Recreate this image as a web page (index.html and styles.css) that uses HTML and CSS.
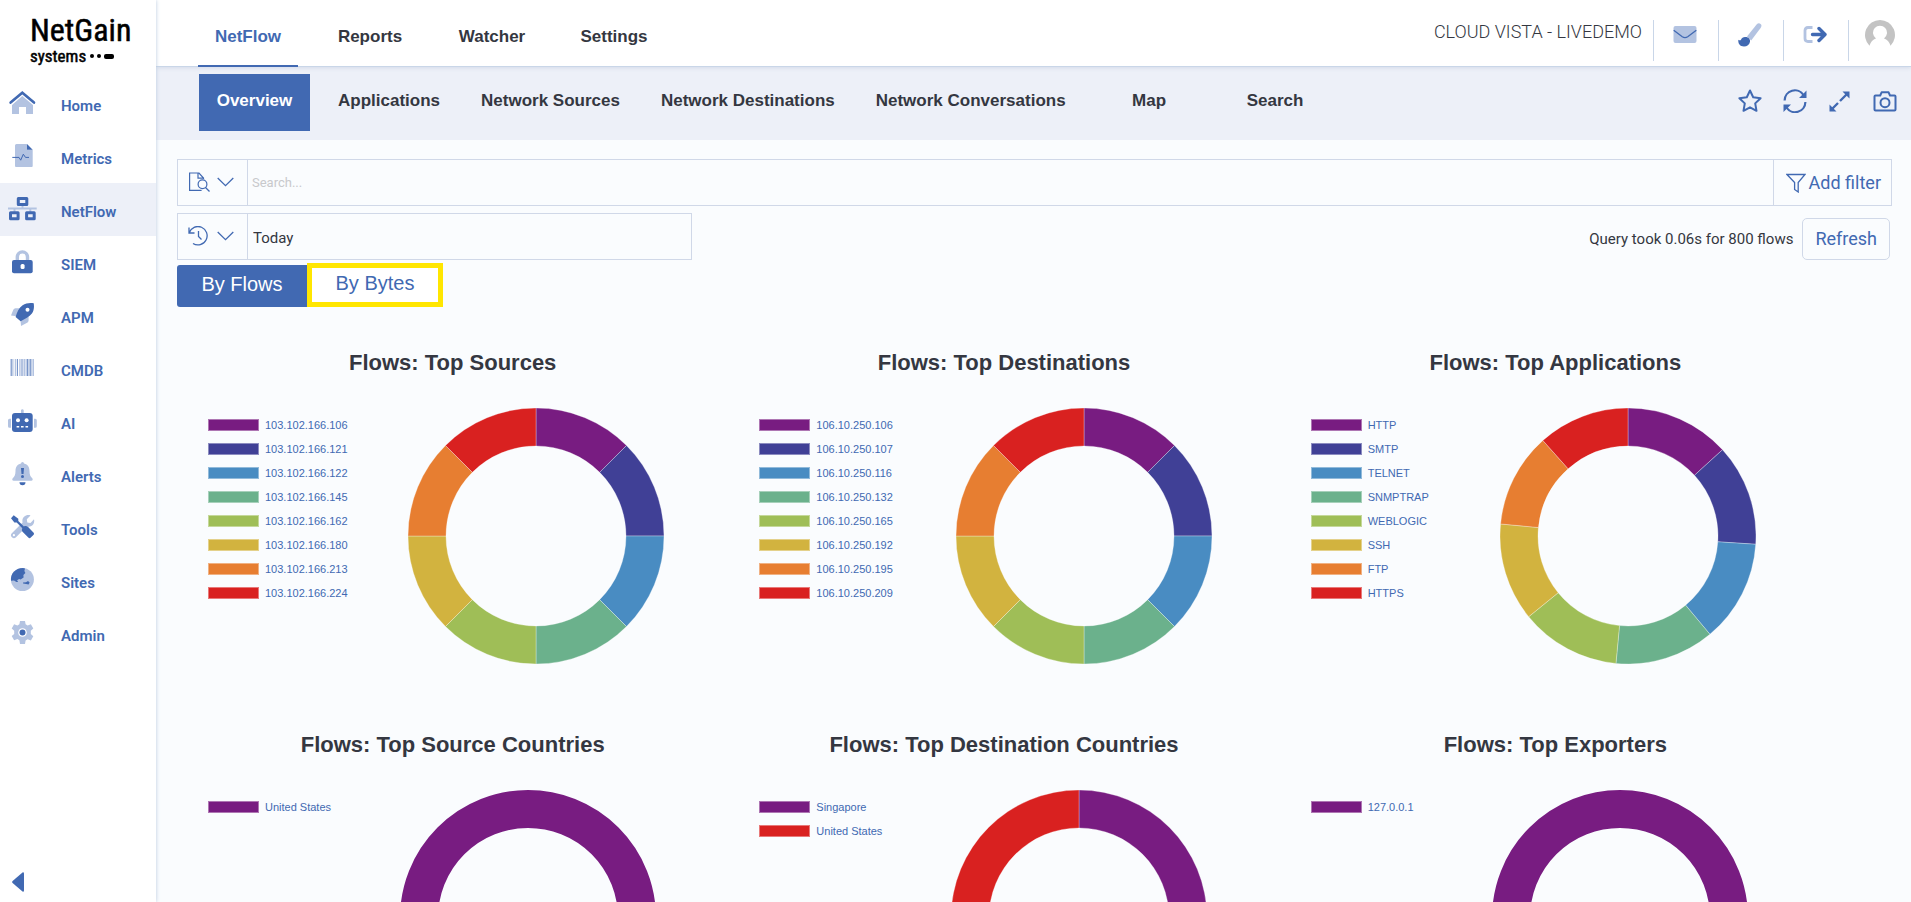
FILE: index.html
```html
<!DOCTYPE html>
<html lang="en">
<head>
  <meta charset="UTF-8" />
  <meta name="viewport" content="width=device-width, initial-scale=1.0"/>
  <title>NetFlow Overview</title>
  <link rel="stylesheet" href="styles.css">
</head>
<body>
  <aside class="sidebar">
    <div class="logo">
      <div class="logo-name">NetGain</div>
      <div class="logo-sub">systems
        <svg width="24" height="6" viewBox="0 0 24 6"><circle cx="2" cy="3" r="2"/><circle cx="9" cy="3" r="2"/><rect x="14" y="1" width="10" height="5" rx="2"/></svg>
      </div>
    </div>
    <nav class="side-nav">
      <a href="#">
        <svg viewBox="0 0 30 24"><path class="light" d="M15.3 5L26 14v9h-7v-7h-7v7H5v-9z"/><path class="line" stroke-width="2.6" stroke-linecap="round" d="M3.6 11.6L15.3 1.8 27 11.6"/></svg>
        <span>Home</span>
      </a>
      <a href="#">
        <svg viewBox="0 0 30 24"><path class="light" d="M9.500 0H20v5.700h5.700V22q0 1-1 1H9q-1 0-1-1V1.500Q8 0 9.500 0z"/><path class="dark" d="M20 0l5.700 5.700H20z"/><path class="line" d="M5.300 13.400H12l1.700 2.800 2.600-6 2.200 3.200H22"/></svg>
        <span>Metrics</span>
      </a>
      <a href="#" class="active">
        <svg viewBox="0 0 30 24"><path class="line-light" stroke-width="2" d="M1 11.500h28.700M15.500 9v3M7.500 12v3M23.300 12v3"/><path class="line" stroke-width="3" stroke-linejoin="round" d="M11.300 1.500h8.500v6h-8.500zM3.500 15.700h7.600v6H3.500zM19.600 15.700h7.600v6h-7.600z"/></svg>
        <span>NetFlow</span>
      </a>
      <a href="#">
        <svg viewBox="0 0 30 24"><path class="line-light" stroke-width="3.400" d="M10.300 11V7a5.100 5.100 0 0 1 10.200 0v4"/><rect class="dark" x="5" y="10" width="20.700" height="13.300" rx="2"/><rect class="white" x="13.600" y="14" width="4" height="5" rx="1.600"/></svg>
        <span>SIEM</span>
      </a>
      <a href="#">
        <svg viewBox="0 0 30 24"><path class="light" d="M14 5.300H8.500Q7 5.300 6.300 6.800L4 12.600l6 .6zM21.600 13v4.500q0 1.200-1 1.900L14 23l-.5-6z"/><path class="dark" d="M26.700.3c.6 3.500.3 7.200-1.800 10.200-2.500 3.500-7 5.500-11.300 7.700L8.600 14c1.500-4.800 3.200-9.200 7-11.700C18.800.1 23-.3 26.700.3z"/><circle class="white" cx="20.500" cy="6.700" r="2"/></svg>
        <span>APM</span>
      </a>
      <a href="#">
        <svg viewBox="0 0 30 24"><path class="line-light" stroke-width="1.200" d="M3.900 3v17M8.500 3v17M12.800 3v17M17.500 3v17M19.200 3v17M22 3v17M24.800 3v17M26.400 3v17"/><path class="line" stroke-width=".8" d="M4.900 3v17M10.400 3v17M15 3v17M20.600 3v17M23.300 3v17"/><path class="line-light" stroke-width=".6" d="M6.700 3v17M14 3v17M16.300 3v17"/></svg>
        <span>CMDB</span>
      </a>
      <a href="#">
        <svg viewBox="0 0 30 24"><path class="light" d="M14 1.300a1.400 1.400 0 0 1 2.700 0V5H14zM4 9.700v9H2.500Q1 18.700 1 17.200v-6q0-1.500 1.500-1.500zM27 9.700v9h1.300q1.500 0 1.500-1.500v-6q0-1.500-1.500-1.500z"/><rect class="dark" x="5" y="4" width="20.700" height="19" rx="3"/><circle class="white" cx="11" cy="11.300" r="2"/><circle class="white" cx="19.600" cy="11.300" r="2"/><path class="white" d="M9.600 17h2.600v1.500H9.600zM14 17h2.600v1.500H14zM18.500 17h2.600v1.500h-2.600z"/></svg>
        <span>AI</span>
      </a>
      <a href="#">
        <svg viewBox="0 0 30 24"><path class="light" d="M14 1.500a1.500 1.500 0 0 1 3 0c4 .8 5.500 4 5.500 7.500 0 4 1 5.500 2.800 7.200.8 1.200.3 2.500-1 2.500H6.700c-1.400 0-1.900-1.300-1-2.500C7.500 14.500 8.500 13 8.500 9c0-3.500 1.500-6.700 5.500-7.500z"/><path class="dark" d="M14 6h3l-.5 6h-2zM12.500 20.300h6a3 3 0 0 1-6 0z"/><circle class="dark" cx="15.500" cy="14.600" r="1.500"/></svg>
        <span>Alerts</span>
      </a>
      <a href="#">
        <svg viewBox="0 0 30 24"><path class="light" d="M23.500.4l-3.700 3.800.5 3.200 3.200.5L27 4.300c.8 3-.5 6-3.300 7-1.500.6-2.800.5-4 .1L9 22.200a2.800 2.800 0 0 1-4.200-3.900L15.600 7.600C14.400 3 18.500-1 23.500.4z"/><circle class="white" cx="6.900" cy="20.200" r="1.100"/><path class="dark" d="M4 3.200L6.700.3l4.600 3.400v2.200l5.600 5.600c1.500-.8 3-.5 4.200.6l5.300 5.300c.8.800.8 1.700 0 2.500l-2.600 2.700c-.8.800-1.700.8-2.500 0L16 17.300c-1.200-1.200-1.400-2.700-.7-4.100L9.700 7.600H7.400z"/></svg>
        <span>Tools</span>
      </a>
      <a href="#">
        <svg viewBox="0 0 30 24"><circle class="light" cx="15.400" cy="11.500" r="11.500"/><path class="dark" d="M16 0l2 .5-.6 2.500 1 2-2 2 .2 2.500-3 2-1.500-.5-2 1.200 1 1.800-1.700 0L7 12.500 4 12.800C3.300 5.500 8.500 0 16 0zM16 14.500l3-.3 2-1.200 1.600 1.500-1 2-2.500-.6-3-.3z"/></svg>
        <span>Sites</span>
      </a>
      <a href="#">
        <svg viewBox="0 0 30 24"><path class="light" d="M13 0h5l.6 3.300 2 1.200 3.300-1.200 2.400 4.200-2.500 2.200v3.400l2.500 2.200-2.400 4.200-3.300-1.200-2 1.200L18 23h-5l-.6-3.700-2-1.200-3.300 1.200-2.400-4.200 2.500-2.200V9.700L4.700 7.500l2.400-4.200 3.300 1.200 2-1.200z"/><circle class="white" cx="15.500" cy="11.500" r="4.300"/><circle class="dark" cx="15.500" cy="11.500" r="3"/></svg>
        <span>Admin</span>
      </a>
    </nav>
    <button class="collapse" aria-label="Collapse menu">
      <svg width="12" height="20" viewBox="0 0 12 20"><path class="dark" d="M10.500.4Q12 0 12 1.500v17q0 1.500-1.500 1.100L.6 11Q-.3 10 .6 9z"/></svg>
    </button>
  </aside>

  <div class="page">
    <header class="topbar">
      <nav class="tabs">
        <a href="#" class="active">NetFlow</a>
        <a href="#">Reports</a>
        <a href="#">Watcher</a>
        <a href="#">Settings</a>
      </nav>
      <div class="account">
        <span class="tenant">CLOUD VISTA - LIVEDEMO</span>
        <button class="top-btn" aria-label="Messages">
          <svg width="24" height="24" viewBox="0 0 24 24"><rect class="light" x=".5" y="3" width="23" height="17" rx="2"/><path class="line" stroke-width="1.300" d="M.7 7.300l8.600 6.500q2.700 1.800 5.400 0l8.600-6.500"/></svg>
        </button>
        <button class="top-btn" aria-label="Theme">
          <svg width="24" height="24" viewBox="0 0 24 24"><path class="light" d="M9 13.500L18.600 1.600q2-2.200 4 -.6 1.700 1.600 0 4L13.200 17.500z"/><path class="dark" d="M7 14c3.300-.3 5.500 2 5 4.800-.5 3-3 4.700-6 4.700-4 0-6-2.700-5.700-6.700 1.300.9 2.300.7 2.800-.4C3.700 14.800 5 14.200 7 14z"/></svg>
        </button>
        <button class="top-btn" aria-label="Log out">
          <svg width="24" height="24" viewBox="0 0 24 24"><path class="line-light" stroke-width="2.800" d="M9.500 4.500H5Q2 4.500 2 7.500v8q0 3 3 3h4.500"/><path class="line" stroke-width="3.400" stroke-linejoin="round" stroke-linecap="round" d="M9.500 11.500H21M16 5.500l6 6-6 6"/></svg>
        </button>
        <button class="top-btn profile" aria-label="Profile">
          <svg width="30" height="30" viewBox="0 0 30 30"><path fill="#c3c3c3" d="M15 0a15 15 0 0 1 10.500 25.700C24.500 22 22 19.500 19 18.500a7 7 0 1 0-8 0C8 19.500 5.500 22 4.500 25.700A15 15 0 0 1 15 0z"/></svg>
        </button>
      </div>
    </header>

    <div class="subnav">
      <ul class="sub-links">
        <li><a href="#" class="active">Overview</a></li>
        <li><a href="#">Applications</a></li>
        <li><a href="#">Network Sources</a></li>
        <li><a href="#">Network Destinations</a></li>
        <li><a href="#">Network Conversations</a></li>
        <li><a href="#">Map</a></li>
        <li><a href="#">Search</a></li>
      </ul>
      <div class="sub-actions">
        <button aria-label="Favourite">
          <svg width="24" height="24" viewBox="0 0 24 24"><path class="line" stroke-width="2" stroke-linejoin="round" d="M12 1.500l3.200 6.700 7.400 1-5.400 5.200 1.300 7.400L12 18.300l-6.500 3.500 1.300-7.400L1.400 9.200l7.400-1z"/></svg>
        </button>
        <button aria-label="Reload">
          <svg width="24" height="24" viewBox="0 0 24 24"><path class="line" stroke-width="2.200" d="M1.600 11.500A10.300 10.300 0 0 1 20.500 6M22.400 13A10.300 10.300 0 0 1 3.500 18.500"/><path class="dark" d="M23.500 1.500V9H16zM.5 23v-7.500H8z"/></svg>
        </button>
        <button aria-label="Full screen">
          <svg width="24" height="24" viewBox="0 0 24 24"><path class="line" stroke-width="2.400" d="M4 20l6-6M12 12l7-7"/><path class="dark" d="M21.500 2.500v7l-7-7zM1.500 22.500v-7l7 7z"/></svg>
        </button>
        <button aria-label="Snapshot">
          <svg width="24" height="24" viewBox="0 0 24 24"><path class="line" stroke-width="2" stroke-linejoin="round" d="M2.500 6.500h4.700l1.400-3.200h7l1.400 3.200h4.500q1 0 1 1v13q0 1-1 1h-19q-1 0-1-1v-13q0-1 1-1z"/><circle class="line" stroke-width="2" cx="12" cy="13.700" r="4.500"/></svg>
        </button>
      </div>
    </div>

    <main class="content">
      <div class="search-bar">
        <button class="picker" aria-label="Saved queries">
          <svg width="22" height="20" viewBox="0 0 22 20"><path class="line" stroke-width="1.200" d="M15.500 7V6L11 1H1.600v17.400h12M10 1v5.200h5"/><circle class="line" stroke-width="1.200" cx="14.500" cy="12.200" r="4.400"/><path class="line" stroke-width="1.200" d="M17.500 15.500l4 4"/></svg>
          <svg width="17" height="10" viewBox="0 0 17 10"><path class="line" stroke-width="1.300" d="M.7 1l7.800 7.600L16.300 1"/></svg>
        </button>
        <input class="search-input" type="text" placeholder="Search..." aria-label="Search">
        <button class="add-filter">
          <svg width="20" height="20" viewBox="0 0 20 20"><path class="line" stroke-width="1.300" d="M1 1.500h18l-6.800 8v9.500l-3.600-2.500v-7z"/></svg>
          Add filter
        </button>
      </div>

      <div class="time-row">
        <div class="time-bar">
          <button class="picker" aria-label="Quick ranges">
            <svg width="22" height="20" viewBox="0 0 22 20"><path class="line" stroke-width="1.300" d="M1 1.500V7h5.500M1.200 6.800A9.200 9.200 0 1 1 5 17.500M10.500 5v5.500l3 3"/></svg>
            <svg width="17" height="10" viewBox="0 0 17 10"><path class="line" stroke-width="1.300" d="M.7 1l7.800 7.600L16.300 1"/></svg>
          </button>
          <input class="time-input" type="text" value="Today" aria-label="Time range">
        </div>
        <span class="query-info">Query took 0.06s for 800 flows</span>
        <button class="refresh">Refresh</button>
      </div>

      <div class="toggle">
        <button class="selected">By Flows</button>
        <button class="marked">By Bytes</button>
      </div>

      <div class="charts" id="charts"></div>
    </main>
  </div>

  <script>
    const colors = ["#781c81", "#404096", "#498cc2", "#6bb18c", "#9fbe57", "#d2b33f", "#e77e31", "#d92120"];
    const equal = [1, 1, 1, 1, 1, 1, 1, 1];
    const charts = [
      {
        title: "Flows: Top Sources",
        labels: ["103.102.166.106", "103.102.166.121", "103.102.166.122", "103.102.166.145", "103.102.166.162", "103.102.166.180", "103.102.166.213", "103.102.166.224"],
        values: equal
      },
      {
        title: "Flows: Top Destinations",
        labels: ["106.10.250.106", "106.10.250.107", "106.10.250.116", "106.10.250.132", "106.10.250.165", "106.10.250.192", "106.10.250.195", "106.10.250.209"],
        values: equal
      },
      {
        title: "Flows: Top Applications",
        labels: ["HTTP", "SMTP", "TELNET", "SNMPTRAP", "WEBLOGIC", "SSH", "FTP", "HTTPS"],
        values: [476, 461, 465, 452, 455, 445, 429, 417]
      },
      { title: "Flows: Top Source Countries", labels: ["United States"], values: [1] },
      { title: "Flows: Top Destination Countries", labels: ["Singapore", "United States"], values: [1, 1] },
      { title: "Flows: Top Exporters", labels: ["127.0.0.1"], values: [1] }
    ];

    // first label is always purple, last one of several is always red
    function colorFor(i, count) {
      return i > 0 && i === count - 1 ? colors[colors.length - 1] : colors[i];
    }

    function point(angle, r) {
      return (128 + r * Math.sin(angle)).toFixed(2) + " " + (128 - r * Math.cos(angle)).toFixed(2);
    }

    function donut(values) {
      if (values.length === 1) {
        return '<circle cx="128" cy="128" r="109" fill="none" stroke-width="38" stroke="' + colors[0] + '"/>';
      }
      const total = values.reduce((a, b) => a + b, 0);
      let start = 0;
      return values.map((v, i) => {
        const end = start + v / total * Math.PI * 2;
        const d = "M" + point(start, 128) + "A128 128 0 0 1 " + point(end, 128) +
          "L" + point(end, 90) + "A90 90 0 0 0 " + point(start, 90) + "z";
        start = end;
        return '<path class="slice" d="' + d + '" fill="' + colorFor(i, values.length) + '"/>';
      }).join("");
    }

    document.getElementById("charts").innerHTML = charts.map(c => `
      <section class="chart">
        <h2>${c.title}</h2>
        <div class="chart-body">
          <ul class="legend">
            ${c.labels.map((l, i) => `<li><span class="swatch" style="background:${colorFor(i, c.labels.length)}"></span>${l}</li>`).join("")}
          </ul>
          <div class="plot"><svg class="donut" viewBox="0 0 256 256">${donut(c.values)}</svg></div>
        </div>
      </section>`).join("");
  </script>
</body>
</html>
```

FILE: styles.css
```css
* {
  box-sizing: border-box;
}

body {
  margin: 0;
  display: flex;
  height: 100vh;
  overflow: hidden;
  font-family: Roboto, sans-serif;
  font-size: 15px;
  color: #343741;
  background: #fafcfe;
}

a {
  color: inherit;
  text-decoration: none;
}

ul {
  list-style: none;
  margin: 0;
  padding: 0;
}

button {
  border: none;
  background: none;
  padding: 0;
  font: inherit;
  color: #4169b2;
  cursor: pointer;
}

svg {
  display: block;
  flex: none;
}

/* two-tone icons */
.dark {
  fill: #4169b2;
}

.light {
  fill: #b3c3e1;
}

.white {
  fill: #fff;
}

.line {
  fill: none;
  stroke: #4169b2;
}

.line-light {
  fill: none;
  stroke: #b3c3e1;
}

/* Sidebar */
.sidebar {
  position: relative;
  z-index: 1;
  flex: none;
  display: flex;
  flex-direction: column;
  width: 156px;
  background: #fff;
  box-shadow: 0 0 4px #b9c9de;
}

.logo {
  height: 77px;
  padding: 12px 0 0 30px;
  color: #000;
  font-family: "Liberation Sans Narrow", "Roboto Condensed", Roboto, sans-serif;
  -webkit-text-stroke: 0.5px #000;
}

.logo-name {
  font-size: 32px;
  line-height: 36px;
}

.logo-sub {
  display: flex;
  align-items: center;
  gap: 4px;
  font-size: 17px;
  line-height: 16px;
}

.side-nav {
  flex: 1;
}

.side-nav a {
  display: flex;
  align-items: center;
  gap: 24px;
  height: 53px;
  padding-left: 7px;
  color: #4169b2;
  font-weight: 600;
}

.side-nav a.active,
.side-nav a:hover {
  background: #edf0f8;
}

.side-nav svg {
  width: 30px;
  height: 24px;
  margin-bottom: 2px;
}

.side-nav span {
  padding-top: 4px;
}

.collapse {
  align-self: flex-start;
  padding: 10px 12px;
}

/* Top bar */
.page {
  flex: 1;
  min-width: 0;
  display: flex;
  flex-direction: column;
}

.topbar {
  position: relative;
  flex: none;
  display: flex;
  justify-content: space-between;
  height: 67px;
  padding-left: 42px;
  background: #fff;
  border-bottom: 1px solid #c9d6e8;
  box-shadow: 0 1px 4px #d3dbe9;
}

.tabs {
  display: flex;
  gap: 22px;
  font: 600 17px "Liberation Sans", sans-serif;
}

.tabs a {
  width: 100px;
  height: 67px;
  line-height: 74px;
  text-align: center;
}

.tabs a.active {
  color: #4169b2;
  border-bottom: 2px solid #4169b2;
}

.account {
  display: flex;
  padding-top: 20px;
}

.tenant {
  padding-right: 11px;
  font-size: 18px;
  font-weight: 300;
  line-height: 24px;
}

.top-btn {
  display: flex;
  justify-content: center;
  width: 65px;
  height: 41px;
  padding: 3px 3px 0 0;
  border-left: 1px solid #c9d6e8;
}

.profile {
  width: 63px;
  padding: 0;
}

/* Sub navigation */
.subnav {
  flex: none;
  display: flex;
  justify-content: space-between;
  padding: 7px 14px 9px 38px;
  background: #edf0f8;
}

.sub-links {
  display: flex;
  gap: 5px;
  font: 600 17px "Liberation Sans", sans-serif;
}

.sub-links li {
  display: flex;
  justify-content: center;
  min-width: 121px;
}

.sub-links a {
  height: 57px;
  padding: 0 18px;
  line-height: 54px;
  white-space: nowrap;
}

.sub-links a.active {
  background: #4169b2;
  color: #fff;
}

.sub-actions {
  display: flex;
  align-items: center;
  gap: 21px;
  padding-bottom: 3px;
}

/* Filters */
.content {
  flex: 1;
  min-height: 0;
  overflow-y: auto;
  scrollbar-width: none;
  padding: 19px 19px 0 21px;
}

.search-bar,
.time-bar {
  display: flex;
  height: 47px;
  border: 1px solid #d0d8e8;
}

.picker {
  display: flex;
  align-items: center;
  gap: 7px;
  width: 70px;
  padding: 0 0 2px 10px;
  border-right: 1px solid #d0d8e8;
}

.search-input,
.time-input {
  flex: 1;
  min-width: 0;
  border: none;
  outline: none;
  background: none;
  padding: 0 4px;
  font: 13px Roboto, sans-serif;
  color: #343741;
}

.time-input {
  padding: 2px 5px 0;
  font-size: 15px;
}

.search-input::placeholder {
  color: #c8c9cc;
}

.add-filter {
  display: flex;
  align-items: center;
  gap: 3px;
  padding: 0 10px 0 12px;
  border-left: 1px solid #d0d8e8;
  font-size: 18px;
}

.time-row {
  display: flex;
  align-items: flex-end;
  margin-top: 7px;
}

.time-bar {
  width: 30%;
}

.query-info {
  margin-left: auto;
  line-height: 41px;
}

.refresh {
  height: 42px;
  margin: 0 2px 0 9px;
  padding: 0 12px 2px;
  border: 1px solid #d0d8e8;
  border-radius: 5px;
  font-size: 18px;
}

.toggle {
  display: flex;
  align-items: flex-end;
  height: 47px;
}

.toggle button {
  width: 130px;
  height: 42px;
  padding-bottom: 3px;
  font: 20px "Liberation Sans", sans-serif;
}

.toggle .selected {
  background: #4169b2;
  color: #fff;
  border-radius: 3px 0 0 3px;
}

.toggle .marked {
  width: 136px;
  height: 44px;
  background: #fff;
  border: 5px solid #ffe600;
}

/* Charts */
.charts {
  display: grid;
  grid-template-columns: repeat(3, 1fr);
  margin-top: 28px;
  padding-right: 61px;
}

.chart {
  height: 382px;
  padding-top: 15px;
}

.chart h2 {
  margin: 0 0 32px;
  font: 600 22px/26px "Liberation Sans", sans-serif;
  text-align: center;
}

.chart-body {
  display: flex;
  padding: 0 14px 0 31px;
}

.legend {
  padding-top: 5px;
  font: 11px/24px "Liberation Sans", sans-serif;
  color: #4169b2;
}

.legend li {
  display: flex;
  align-items: center;
  gap: 6px;
}

.swatch {
  width: 51px;
  height: 12px;
  border: 1px solid rgba(255, 255, 255, 0.4);
}

.plot {
  flex: 1;
  display: flex;
  justify-content: center;
  padding-left: 10px;
}

.donut {
  width: 256px;
  height: 256px;
}

.slice {
  stroke: rgba(255, 255, 255, 0.3);
  stroke-width: 1;
}
```
